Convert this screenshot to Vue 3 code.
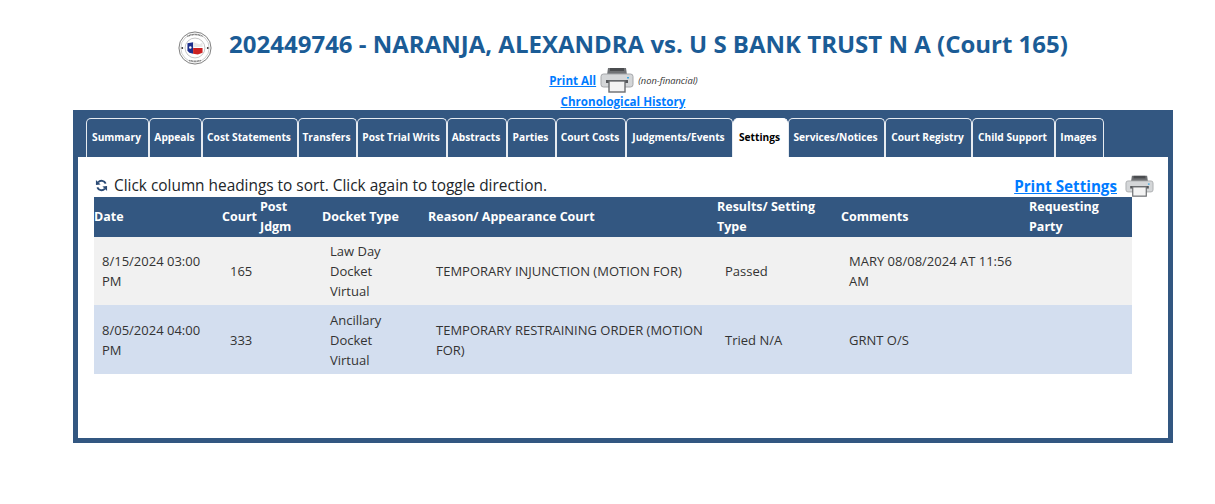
<script setup>
const tabs = ['Summary', 'Appeals', 'Cost Statements', 'Transfers', 'Post Trial Writs', 'Abstracts', 'Parties', 'Court Costs', 'Judgments/Events', 'Settings', 'Services/Notices', 'Court Registry', 'Child Support', 'Images']

const rows = [
  { date: '8/15/2024 03:00 PM', court: '165', docket: ['Law Day', 'Docket', 'Virtual'], reason: 'TEMPORARY INJUNCTION (MOTION FOR)', result: 'Passed', comments: 'MARY 08/08/2024 AT 11:56 AM' },
  { date: '8/05/2024 04:00 PM', court: '333', docket: ['Ancillary', 'Docket', 'Virtual'], reason: 'TEMPORARY RESTRAINING ORDER (MOTION FOR)', result: 'Tried N/A', comments: 'GRNT O/S' },
]
</script>

<template>
  <div class="page">
    <div class="title">
      <svg class="seal" viewBox="0 0 36 36" width="34" height="34">
        <circle cx="18" cy="18" r="17" fill="#fff" stroke="#777" stroke-width="1" />
        <circle cx="18" cy="18" r="15" fill="none" stroke="#aaa" stroke-width="0.6" />
        <circle cx="18" cy="18" r="10.5" fill="#fff" stroke="#999" stroke-width="0.6" />
        <path d="M10 13 L16 12 L16 24 L12 23 L10 21 Z" fill="#1c2f8c" />
        <path d="M16 12 L23 14 L26 12 L26 17 L16 17 Z" fill="#e8e8e8" />
        <path d="M16 18 L26 18 L26 23 L21 25 L16 24 Z" fill="#cc2222" />
        <circle cx="13" cy="17.5" r="1.3" fill="#fff" />
        <circle cx="4.5" cy="18" r="1" fill="#333" />
        <circle cx="31.5" cy="18" r="1" fill="#333" />
        <path d="M10 5.6 Q18 2 26 5.6" fill="none" stroke="#666" stroke-width="1.4" stroke-dasharray="1 .6" />
        <path d="M12 31 Q18 33 24 31" fill="none" stroke="#666" stroke-width="1.4" stroke-dasharray="1 .6" />
      </svg>
      <h1>202449746 - NARANJA, ALEXANDRA vs. U S BANK TRUST N A (Court 165)</h1>
    </div>

    <div class="print-all">
      <a href="#">Print All</a>
      <svg class="printer" viewBox="0 0 34 26" width="34" height="26">
        <path d="M8 1 H26 L27 8 H7 Z" fill="#6f7174" />
        <path d="M10 1 H24 V4 H10 Z" fill="#4a4c4f" />
        <rect x="1" y="7" width="32" height="13" rx="2.5" fill="#d4d6d8" stroke="#a5a7aa" />
        <rect x="27" y="10" width="2" height="1.5" fill="#3fa7e0" />
        <rect x="6" y="13" width="22" height="3" fill="#56585b" />
        <rect x="9" y="14" width="16" height="11" fill="#f3f3f3" stroke="#6b6d70" stroke-width="1.4" />
      </svg>
      <em>(non-financial)</em>
    </div>
    <div class="history"><a href="#">Chronological History</a></div>

    <div class="panel">
      <ul class="tabs">
        <li v-for="tab in tabs" :key="tab" :class="{ active: tab === 'Settings' }">{{ tab }}</li>
      </ul>
      <div class="body">
        <div class="toolbar">
          <div class="hint">
            <svg class="refresh" viewBox="0 0 14 14" width="13" height="13">
              <path d="M11.5 5 A4.8 4.8 0 0 0 3.4 3.6" fill="none" stroke="#2b4a75" stroke-width="2" />
              <path d="M1 1 L6 5.8 L1 6.4 Z" fill="#2b4a75" />
              <path d="M2.5 9 A4.8 4.8 0 0 0 10.6 10.4" fill="none" stroke="#2b4a75" stroke-width="2" />
              <path d="M13 13 L8 8.2 L13 7.6 Z" fill="#2b4a75" />
            </svg>
            Click column headings to sort. Click again to toggle direction.
          </div>
          <div class="print-settings">
            <a href="#">Print Settings</a>
            <svg class="printer" viewBox="0 0 34 26" width="29" height="22">
              <path d="M8 1 H26 L27 8 H7 Z" fill="#6f7174" />
              <path d="M10 1 H24 V4 H10 Z" fill="#4a4c4f" />
              <rect x="1" y="7" width="32" height="13" rx="2.5" fill="#d4d6d8" stroke="#a5a7aa" />
              <rect x="27" y="10" width="2" height="1.5" fill="#3fa7e0" />
              <rect x="6" y="13" width="22" height="3" fill="#56585b" />
              <rect x="9" y="14" width="16" height="11" fill="#f3f3f3" stroke="#6b6d70" stroke-width="1.4" />
            </svg>
          </div>
        </div>

        <table>
          <colgroup>
            <col style="width: 128px" />
            <col style="width: 38px" />
            <col style="width: 62px" />
            <col style="width: 106px" />
            <col style="width: 289px" />
            <col style="width: 124px" />
            <col style="width: 188px" />
            <col style="width: 103px" />
          </colgroup>
          <thead>
            <tr>
              <th>Date</th>
              <th>Court</th>
              <th>Post Jdgm</th>
              <th>Docket Type</th>
              <th>Reason/ Appearance Court</th>
              <th>Results/ Setting Type</th>
              <th>Comments</th>
              <th>Requesting Party</th>
            </tr>
          </thead>
          <tbody>
            <tr v-for="row in rows" :key="row.date">
              <td>{{ row.date }}</td>
              <td>{{ row.court }}</td>
              <td></td>
              <td><div v-for="line in row.docket" :key="line">{{ line }}</div></td>
              <td>{{ row.reason }}</td>
              <td>{{ row.result }}</td>
              <td>{{ row.comments }}</td>
              <td></td>
            </tr>
          </tbody>
        </table>
      </div>
    </div>
  </div>
</template>

<style>
html, body {
  background: #fff;
}
</style>

<style scoped>
.page {
  height: 504px;
  overflow: hidden;
  font-family: "Open Sans", "Noto Sans", sans-serif;
  color: #212529;
}

.title {
  display: flex;
  align-items: center;
  justify-content: center;
  gap: 17px;
  padding: 26px 0 0 31px;
  height: 35px;
}

.seal {
  margin-top: 8px;
}

.title h1 {
  margin: 0;
  font-size: 24px;
  font-weight: 700;
  color: #1b5c96;
  white-space: nowrap;
}

.print-all {
  display: flex;
  align-items: center;
  justify-content: center;
  gap: 4px;
  margin-top: 6px;
  height: 26px;
  padding-left: 32px;
}

a {
  color: #007bff;
  font-weight: 700;
  text-decoration: underline;
}

.print-all a,
.history a {
  font-size: 11.6px;
}

.print-all em {
  font-size: 9.3px;
  color: #333;
}

.history {
  text-align: center;
  font-size: 12px;
  line-height: 18px;
  padding-left: 31px;
}

.panel {
  box-sizing: border-box;
  width: 1100px;
  height: 333px;
  margin: -1px 0 0 73px;
  background: #335781;
  padding: 8px 5px 5px;
  display: flex;
  flex-direction: column;
}

.tabs {
  display: grid;
  grid-template-columns: 63px 53px 96px 59px 90px 60px 49px 70px 107px 55px 97px 87px 83px 49px;
  justify-content: start;
  list-style: none;
  margin: 0;
  padding: 0 0 0 8px;
  height: 39px;
}

.tabs li {
  box-sizing: border-box;
  padding-right: 2px;
  line-height: 37px;
  font-size: 10.2px;
  font-weight: 700;
  color: #fff;
  text-align: center;
  white-space: nowrap;
  border: 1px solid #e6ebf1;
  border-bottom: none;
  border-radius: 5px 5px 0 0;
}

.tabs li.active {
  background: #fff;
  color: #000;
  border-color: #fff;
}

.body {
  flex: 1;
  background: #fff;
  padding: 0 0 0 16px;
}

.toolbar {
  display: flex;
  justify-content: space-between;
  align-items: center;
  height: 40px;
  padding-right: 14px;
}

.hint {
  font-size: 15.4px;
  padding-top: 16px;
  display: flex;
  align-items: center;
  gap: 6px;
  padding-left: 1px;
}

.print-settings {
  display: flex;
  align-items: center;
  gap: 8px;
  padding-top: 18px;
}

.print-settings a {
  font-size: 15.2px;
}

table {
  width: 1038px;
  table-layout: fixed;
  border-collapse: collapse;
  font-size: 13px;
}

th {
  background: #335781;
  color: #fff;
  text-align: left;
  font-size: 12.5px;
  font-weight: 700;
  padding: 0 8px 0 0;
  height: 40px;
  line-height: 20px;
}

td {
  padding: 0 8px;
  line-height: 20px;
  height: 68px;
  color: #333;
}

tbody tr:nth-child(odd) {
  background: #f1f1f1;
}

tbody tr:nth-child(even) {
  background: #d3deef;
}

tbody tr:nth-child(even) td {
  height: 69px;
}
</style>
